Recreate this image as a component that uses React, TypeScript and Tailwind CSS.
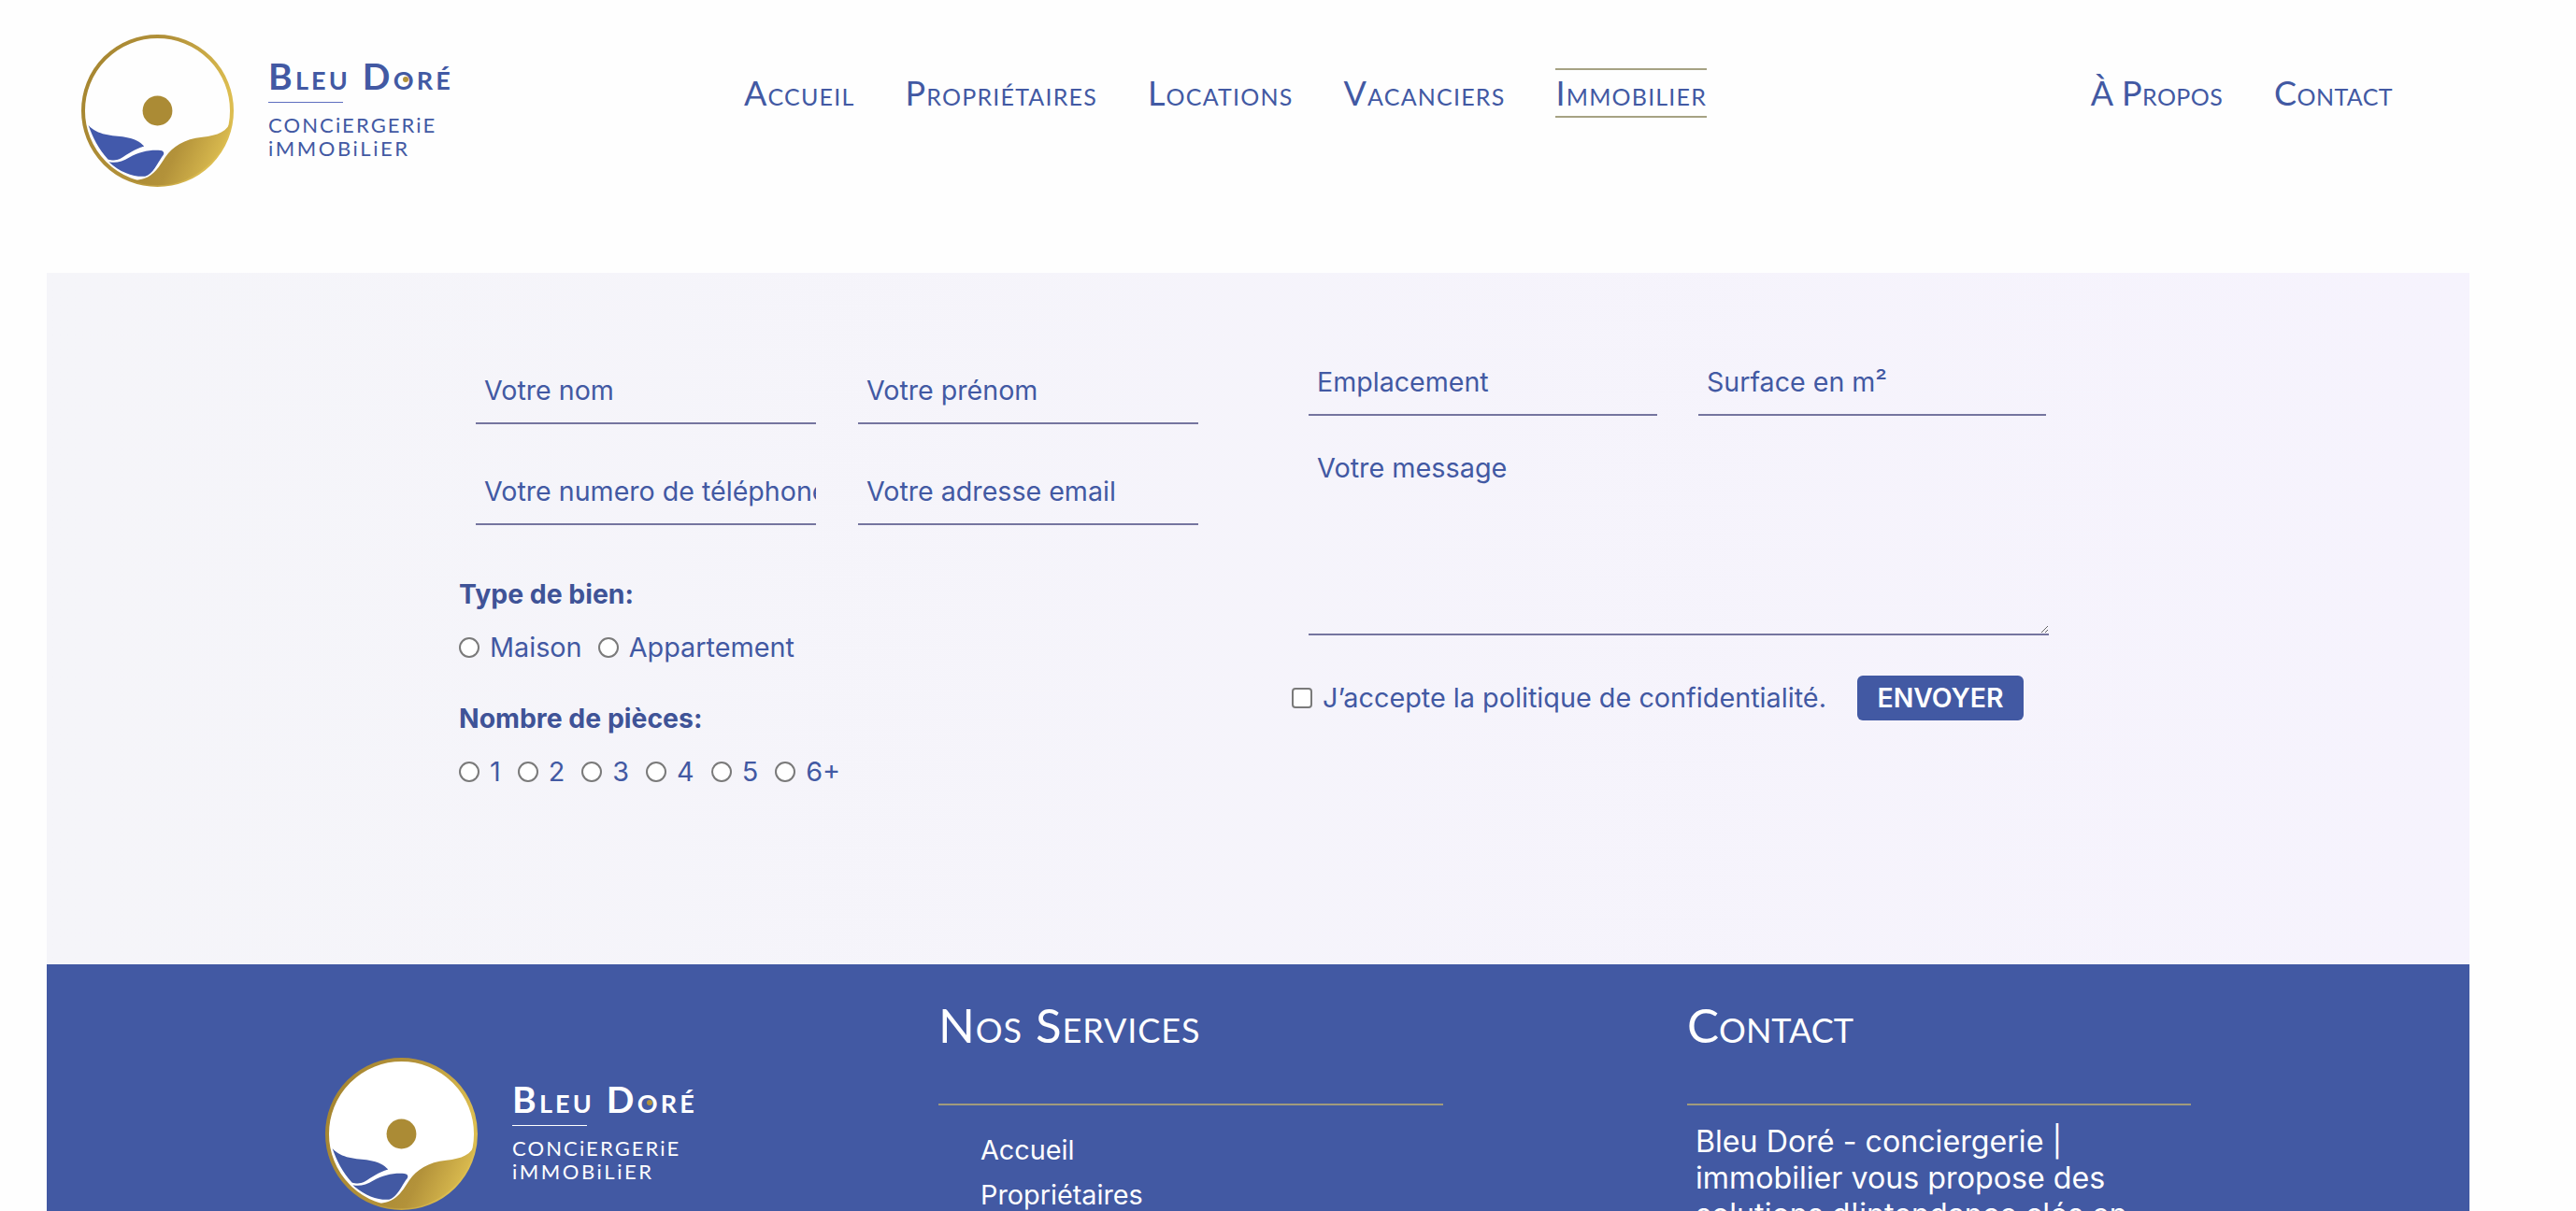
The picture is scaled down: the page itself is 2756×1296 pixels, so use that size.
import React from "react";

const mainNav = ["Accueil", "Propriétaires", "Locations", "Vacanciers", "Immobilier"];
const sideNav = ["À Propos", "Contact"];
const rooms = ["1", "2", "3", "4", "5", "6+"];

const fieldClass =
  "h-[71px] bg-transparent border-b-2 border-[#75759f] pl-[9px] text-[28.6px] outline-none placeholder:text-[#4259a3] placeholder:opacity-100";

function LogoMark({ id, footer }: { id: string; footer?: boolean }) {
  return (
    <svg viewBox="19 19 492 492" className="w-[163px] h-[163px] shrink-0">
      <defs>
        <linearGradient id={id} x1="0" y1="0" x2="1" y2="0.3">
          <stop offset="0" stopColor="#a4842f" />
          <stop offset="0.55" stopColor="#b3923a" />
          <stop offset="1" stopColor="#dcbd50" />
        </linearGradient>
      </defs>
      <circle cx="265" cy="265" r="240" fill={footer ? "#ffffff" : "#fefefe"} stroke={`url(#${id})`} strokeWidth="12" />
      <circle cx="265" cy="265" r="48" fill="#ab8b35" />
      <path
        d="M503 296 C492 332 460 345 410 350 C350 356 315 380 290 415 C270 446 255 472 222 484 C205 490 190 490 176 488 A241 241 0 0 0 265 506 A241 241 0 0 0 503 296 Z"
        fill={`url(#${id})`}
      />
      <path
        d="M42 312 C70 345 120 345 160 350 C190 355 210 365 222 380 C190 390 170 405 145 420 C130 428 115 425 105 422 C75 390 55 350 42 312 Z"
        fill={footer ? "#4259a3" : "#4259ab"}
      />
      <path
        d="M108 430 C130 435 150 430 175 415 C205 398 240 390 275 393 C288 395 288 405 280 413 C265 435 250 470 225 477 C190 480 145 465 108 430 Z"
        fill={footer ? "#4259a3" : "#4259ab"}
      />
    </svg>
  );
}

function Logo({ id, footer }: { id: string; footer?: boolean }) {
  return (
    <div className={`flex items-center gap-[37px] ${footer ? "text-white" : "text-[#4259a3]"}`}>
      <LogoMark id={id} footer={footer} />
      <div className="flex flex-col font-['Lato',sans-serif] mb-[6px]">
        <span className="text-[39px] leading-[44px] font-bold tracking-[3.2px] [font-variant:small-caps] whitespace-nowrap">
          Bleu D
          <span className="relative inline-block">
            o
            <span className="absolute left-[10px] top-[23px] w-[6px] h-[6px] rounded-full bg-[#b3923a]" />
          </span>
          ré
        </span>
        <span className={`w-[80px] h-[1px] mt-[6px] ${footer ? "bg-white" : "bg-[#5f6fc0]"}`} />
        <span className="mt-[12px] text-[22px] leading-[24px] font-normal tracking-[2.1px] whitespace-nowrap">CONCiERGERiE</span>
        <span className="text-[22px] leading-[26px] font-normal tracking-[2.6px] whitespace-nowrap">iMMOBiLiER</span>
      </div>
    </div>
  );
}

function NavLink({ label, active }: { label: string; active?: boolean }) {
  return (
    <a
      className={`block h-[53px] leading-[49px] border-y-2 whitespace-nowrap ${
        active ? "border-[#a6a283]" : "border-transparent"
      }`}
    >
      {label}
    </a>
  );
}

function Radio({ label }: { label: string }) {
  return (
    <label className="flex items-center gap-[11px]">
      <input
        type="radio"
        name={label}
        className="appearance-none w-[22px] h-[22px] rounded-full bg-white border-2 border-[#7a7a7a]"
      />
      {label}
    </label>
  );
}

export default function App() {
  return (
    <div className="h-[1296px] overflow-hidden bg-[#fefefe] font-['Inter',sans-serif] text-[#4259a3]">
      <header className="h-[292px] flex items-start pt-[37px] pl-[87px] pr-[196px]">
        <div className="w-[709px]">
          <Logo id="gold-top" />
        </div>
        <nav className="flex gap-[54px] mt-[36px] font-['Lato',sans-serif] text-[36px] tracking-[1.2px] [font-variant:small-caps]">
          {mainNav.map((item) => (
            <NavLink key={item} label={item} active={item === "Immobilier"} />
          ))}
        </nav>
        <nav className="flex gap-[55px] mt-[36px] ml-auto font-['Lato',sans-serif] text-[36px] tracking-[0.4px] [font-variant:small-caps]">
          {sideNav.map((item) => (
            <NavLink key={item} label={item} />
          ))}
        </nav>
      </header>

      <main className="mx-[50px] w-[2592px]">
        <section className="h-[740px] flex bg-linear-to-r from-[#f5f5f9] to-[#f6f3fd] text-[28.8px]">
          <div className="ml-[441px] w-[891px] pt-[91px]">
            <div className="ml-[18px] grid grid-cols-[364px_364px] gap-x-[45px] gap-y-[37px]">
              <input className={`w-full ${fieldClass}`} placeholder="Votre nom" />
              <input className={`w-full ${fieldClass}`} placeholder="Votre prénom" />
              <input className={`w-full ${fieldClass}`} placeholder="Votre numero de téléphone" />
              <input className={`w-full ${fieldClass}`} placeholder="Votre adresse email" />
            </div>
            <p className="mt-[54px] font-bold text-[28.4px] leading-[40px] text-[#3f5397]">Type de bien:</p>
            <div className="mt-[17px] flex h-[40px] gap-[17px]">
              <Radio label="Maison" />
              <Radio label="Appartement" />
            </div>
            <p className="mt-[36px] font-bold text-[28.4px] leading-[40px] text-[#3f5397]">Nombre de pièces:</p>
            <div className="mt-[17px] flex h-[40px] gap-[18px]">
              {rooms.map((room) => (
                <Radio key={room} label={room} />
              ))}
            </div>
          </div>

          <div className="w-[810px] pt-[82px]">
            <div className="ml-[18px] grid grid-cols-[373px_372px] gap-x-[44px]">
              <input className={`w-full ${fieldClass}`} placeholder="Emplacement" />
              <input className={`w-full ${fieldClass}`} placeholder="Surface en m²" />
            </div>
            <textarea
              className="block ml-[18px] mt-[25px] w-[792px] h-[210px] pl-[9px] pt-[14px] leading-[34px] bg-transparent border-b-2 border-[#75759f] outline-none placeholder:text-[#4259a3] placeholder:opacity-100"
              placeholder="Votre message"
            />
            <div className="mt-[43px] flex items-center">
              <label className="flex items-center gap-[11px] w-[605px]">
                <input
                  type="checkbox"
                  className="appearance-none w-[22px] h-[22px] rounded-[4px] bg-white border-2 border-[#7a7a7a]"
                />
                J’accepte la politique de confidentialité.
              </label>
              <button className="w-[178px] h-[48px] rounded-[6px] bg-[#4259a3] text-white font-semibold text-[28.4px]">
                ENVOYER
              </button>
            </div>
          </div>
        </section>

        <footer className="h-[264px] overflow-hidden flex bg-[#4259a3] text-white">
          <div className="w-[954px] pl-[298px] pt-[100px]">
            <Logo id="gold-bottom" footer />
          </div>
          <div className="w-[801px] pt-[34px]">
            <div className="w-[540px] h-[117px] border-b-2 border-[#a09a7c] font-['Lato',sans-serif] text-[51px] leading-[62px] tracking-[0.9px] [font-variant:small-caps]">
              Nos Services
            </div>
            <ul className="mt-[24px] pl-[45px] text-[28.8px] leading-[48px]">
              <li>Accueil</li>
              <li>Propriétaires</li>
            </ul>
          </div>
          <div className="w-[539px] pt-[34px]">
            <div className="h-[117px] border-b-2 border-[#a09a7c] font-['Lato',sans-serif] text-[51px] leading-[62px] [font-variant:small-caps]">
              Contact
            </div>
            <p className="mt-[19px] pl-[9px] text-[32.2px] leading-[39px]">
              Bleu Doré - conciergerie | immobilier vous propose des solutions d'intendance clés en main
            </p>
          </div>
        </footer>
      </main>
    </div>
  );
}
